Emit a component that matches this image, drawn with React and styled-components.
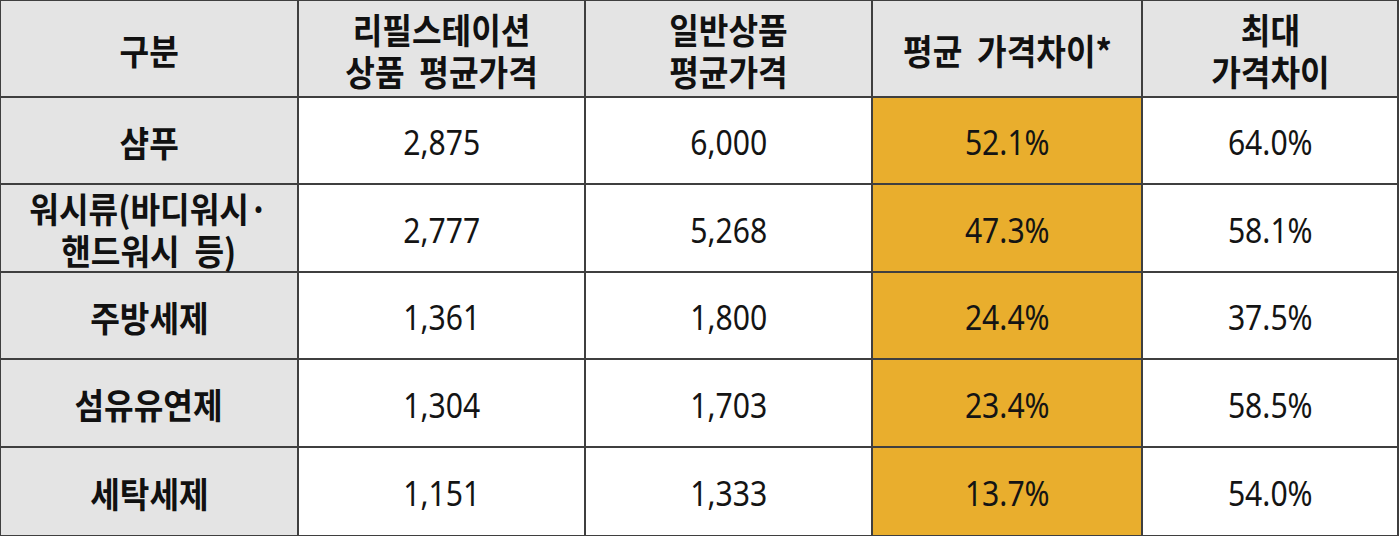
import React from "react";
import styled, { createGlobalStyle } from "styled-components";

const GlobalStyle = createGlobalStyle`
	html, body {
		margin: 0;
		padding: 0;
		background: #ffffff;
	}
	body {
		font-family: "Noto Sans", "Noto Sans CJK KR", sans-serif;
	}
`;

const LINE = "#3f3f3f";

const Grid = styled.div`
	display: grid;
	grid-template-columns: 296px 285px 285px 268px 254px;
	grid-template-rows: 95px 85px 86px 85px 86px 87px;
	gap: 2px;
	padding: 1px 2px 1px 1px;
	width: 1399px;
	box-sizing: border-box;
	background: ${LINE};
`;

const Cell = styled.div`
	display: flex;
	align-items: center;
	justify-content: center;
	text-align: center;
	background: ${(p) => (p.$highlight ? "#e9ae2d" : p.$label ? "#e4e4e4" : "#ffffff")};
`;

const HeadText = styled.div`
	font-family: "Noto Sans CJK KR", sans-serif;
	font-weight: 700;
	font-size: 35px;
	line-height: 42px;
	color: #111111;
	padding-top: 2px;
	transform: scaleX(0.92);
	white-space: nowrap;
`;

const Num = styled.span`
	display: inline-block;
	font-family: "Noto Sans", "Open Sans", sans-serif;
	font-weight: 400;
	font-size: 35px;
	color: #141414;
	transform: scaleX(0.86);
	padding-top: 2px;
`;

const Gap = styled.span`
	display: inline-block;
	width: ${(p) => p.$w || 16}px;
`;

const headers = [
	[["리필스테이션"], ["상품", "평균가격"]],
	[["일반상품"], ["평균가격"]],
	[["평균", "가격차이*"]],
	[["최대"], ["가격차이"]],
];

const rows = [
	{ label: [["샴푸"]], values: ["2,875", "6,000", "52.1%", "64.0%"] },
	{
		label: [["워시류(바디워시·"], ["핸드워시", "등)"]],
		values: ["2,777", "5,268", "47.3%", "58.1%"],
	},
	{ label: [["주방세제"]], values: ["1,361", "1,800", "24.4%", "37.5%"] },
	{ label: [["섬유유연제"]], values: ["1,304", "1,703", "23.4%", "58.5%"] },
	{ label: [["세탁세제"]], values: ["1,151", "1,333", "13.7%", "54.0%"] },
];

const Lines = ({ lines }) => (
	<HeadText>
		{lines.map((words, i) => (
			<div key={i}>
				{words.map((w, j) => (
					<React.Fragment key={j}>
						{j > 0 && <Gap />}
						{w}
					</React.Fragment>
				))}
			</div>
		))}
	</HeadText>
);

const App = () => {
	return (
		<>
			<GlobalStyle />
			<Grid>
				<Cell $label>
					<Lines lines={[["구분"]]} />
				</Cell>
				{headers.map((h, i) => (
					<Cell key={i} $label>
						<Lines lines={h} />
					</Cell>
				))}
				{rows.map((r, i) => (
					<React.Fragment key={i}>
						<Cell $label>
							<Lines lines={r.label} />
						</Cell>
						{r.values.map((v, j) => (
							<Cell key={j} $highlight={j === 2}>
								<Num>{v}</Num>
							</Cell>
						))}
					</React.Fragment>
				))}
			</Grid>
		</>
	);
};

export default App;
